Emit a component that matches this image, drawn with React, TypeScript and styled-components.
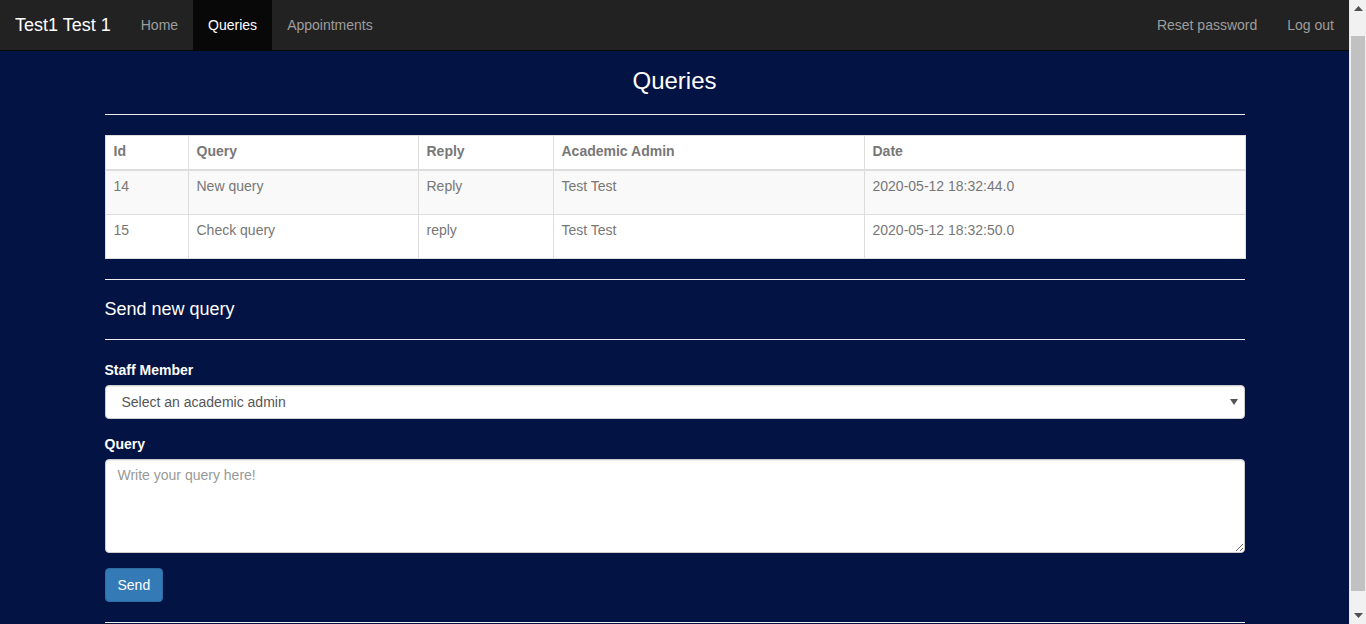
import styled, { createGlobalStyle } from "styled-components";

interface IQuery {
  id: number;
  query: string;
  reply: string;
  admin: string;
  date: string;
}

const queries: IQuery[] = [
  { id: 14, query: "New query", reply: "Reply", admin: "Test Test", date: "2020-05-12 18:32:44.0" },
  { id: 15, query: "Check query", reply: "reply", admin: "Test Test", date: "2020-05-12 18:32:50.0" },
];

const columns = [
  { label: "Id", width: 83 },
  { label: "Query", width: 230 },
  { label: "Reply", width: 135 },
  { label: "Academic Admin", width: 311 },
  { label: "Date", width: 381 },
];

const selectArrow =
  "data:image/svg+xml;utf8,<svg xmlns='http://www.w3.org/2000/svg' width='8' height='6'><path d='M0 0 L8 0 L4 6 Z' fill='%23555'/></svg>";

const GlobalStyle = createGlobalStyle`
  * { box-sizing: border-box; }
  html, body {
    margin: 0;
    padding: 0;
    height: 100%;
    overflow: hidden;
    background: #031343;
    font-family: "Liberation Sans", Arial, sans-serif;
    font-size: 14px;
    line-height: 1.42857;
    color: #333;
  }
`;

const Frame = styled.div`
  display: flex;
  height: 100vh;
  background: #031343;
`;

const Page = styled.div`
  flex: 1;
  min-width: 0;
  overflow: hidden;
`;

const ScrollTrack = styled.div`
  width: 17px;
  flex-shrink: 0;
  display: flex;
  flex-direction: column;
  background: #f1f1f1;
  border-left: 1px solid #e8e8e8;
`;

const ScrollButton = styled.div`
  height: 17px;
  display: flex;
  align-items: center;
  justify-content: center;
`;

const ScrollThumb = styled.div`
  flex: 1;
  margin: 19px 1px 16px 1px;
  background: #c1c1c1;
`;

const Navbar = styled.nav`
  height: 51px;
  background-color: #222;
  border-bottom: 1px solid #080808;
  display: flex;
  justify-content: space-between;
`;

const NavGroup = styled.ul`
  display: flex;
  list-style: none;
  margin: 0;
  padding: 0;
`;

const Brand = styled.a`
  display: block;
  padding: 15px;
  height: 50px;
  font-size: 18px;
  line-height: 20px;
  color: #fff;
  text-decoration: none;
`;

const NavItem = styled.a<{ $active?: boolean }>`
  display: block;
  padding: 15px;
  line-height: 20px;
  height: 50px;
  color: ${(p) => (p.$active ? "#fff" : "#9d9d9d")};
  background-color: ${(p) => (p.$active ? "#080808" : "transparent")};
  text-decoration: none;
`;

const Container = styled.main`
  width: 1170px;
  margin: 0 auto;
  padding: 0 15px 60px;
`;

const Title = styled.h3`
  margin: 17px 0 0;
  font-size: 24px;
  font-weight: 500;
  line-height: 1.1;
  text-align: center;
  color: #fff;
`;

const Rule = styled.hr`
  margin: 20px 0;
  border: 0;
  border-top: 1px solid #eee;
`;

const Table = styled.table`
  width: 100%;
  border-collapse: collapse;
  background-color: #fff;
  table-layout: fixed;
  color: #777;
`;

const HeadCell = styled.th`
  text-align: left;
  font-weight: bold;
  padding: 5px 8px 8px;
  line-height: 20px;
  border: 1px solid #ddd;
  border-bottom: 2px solid #ddd;
`;

const Row = styled.tr<{ $striped: boolean }>`
  background-color: ${(p) => (p.$striped ? "#f9f9f9" : "#fff")};
`;

const Cell = styled.td`
  padding: 5px 8px 18px;
  line-height: 20px;
  vertical-align: top;
  border: 1px solid #ddd;
`;

const SubTitle = styled.h4`
  margin: 0;
  font-size: 18px;
  font-weight: 500;
  line-height: 19px;
  color: #fff;
`;

const FormGroup = styled.div`
  margin-bottom: 15px;
`;

const Label = styled.label`
  display: block;
  margin-bottom: 5px;
  font-weight: bold;
  color: #fff;
  line-height: 20px;
`;

const Select = styled.select`
  display: block;
  width: 100%;
  height: 34px;
  padding: 6px 12px 6px 16px;
  font-family: inherit;
  font-size: 14px;
  color: #555;
  appearance: none;
  background: #fff url("${selectArrow}") no-repeat right 6px center;
  border: 1px solid #ccc;
  border-radius: 4px;
  box-shadow: inset 0 1px 1px rgba(0, 0, 0, 0.075);
`;

const TextArea = styled.textarea`
  display: block;
  width: 100%;
  height: 94px;
  padding: 6px 12px;
  font-family: inherit;
  font-size: 14px;
  line-height: 1.42857;
  color: #555;
  background-color: #fff;
  border: 1px solid #ccc;
  border-radius: 4px;
  box-shadow: inset 0 1px 1px rgba(0, 0, 0, 0.075);
  &::placeholder {
    color: #999;
  }
`;

const Button = styled.button`
  display: inline-block;
  padding: 6px 12px;
  height: 34px;
  font-family: inherit;
  font-size: 14px;
  line-height: 20px;
  color: #fff;
  background-color: #337ab7;
  border: 1px solid #2e6da4;
  border-radius: 4px;
  cursor: pointer;
`;

function Arrow({ up }: { up?: boolean }) {
  return (
    <svg width="9" height="5" viewBox="0 0 9 5">
      <path d={up ? "M0 5 L4.5 0 L9 5 Z" : "M0 0 L4.5 5 L9 0 Z"} fill="#505050" />
    </svg>
  );
}

function App() {
  return (
    <Frame>
      <GlobalStyle />
      <Page>
        <Navbar>
          <NavGroup>
            <li><Brand href="#">Test1 Test 1</Brand></li>
            <li><NavItem href="#">Home</NavItem></li>
            <li><NavItem href="#" $active>Queries</NavItem></li>
            <li><NavItem href="#">Appointments</NavItem></li>
          </NavGroup>
          <NavGroup>
            <li><NavItem href="#">Reset password</NavItem></li>
            <li><NavItem href="#">Log out</NavItem></li>
          </NavGroup>
        </Navbar>
        <Container>
          <Title>Queries</Title>
          <Rule />
          <Table>
            <colgroup>
              {columns.map((c) => (
                <col key={c.label} style={{ width: c.width }} />
              ))}
            </colgroup>
            <thead>
              <tr>
                {columns.map((c) => (
                  <HeadCell key={c.label}>{c.label}</HeadCell>
                ))}
              </tr>
            </thead>
            <tbody>
              {queries.map((q, index) => (
                <Row key={q.id} $striped={index % 2 === 0}>
                  <Cell>{q.id}</Cell>
                  <Cell>{q.query}</Cell>
                  <Cell>{q.reply}</Cell>
                  <Cell>{q.admin}</Cell>
                  <Cell>{q.date}</Cell>
                </Row>
              ))}
            </tbody>
          </Table>
          <Rule />
          <SubTitle>Send new query</SubTitle>
          <Rule />
          <form onSubmit={(e) => e.preventDefault()}>
            <FormGroup>
              <Label htmlFor="staff">Staff Member</Label>
              <Select id="staff" defaultValue="">
                <option value="">Select an academic admin</option>
                <option value="1">Test Test</option>
              </Select>
            </FormGroup>
            <FormGroup>
              <Label htmlFor="query">Query</Label>
              <TextArea id="query" placeholder="Write your query here!" />
            </FormGroup>
            <Button type="submit">Send</Button>
          </form>
          <Rule />
        </Container>
      </Page>
      <ScrollTrack>
        <ScrollButton><Arrow up /></ScrollButton>
        <ScrollThumb />
        <ScrollButton><Arrow /></ScrollButton>
      </ScrollTrack>
    </Frame>
  );
}

export default App;
